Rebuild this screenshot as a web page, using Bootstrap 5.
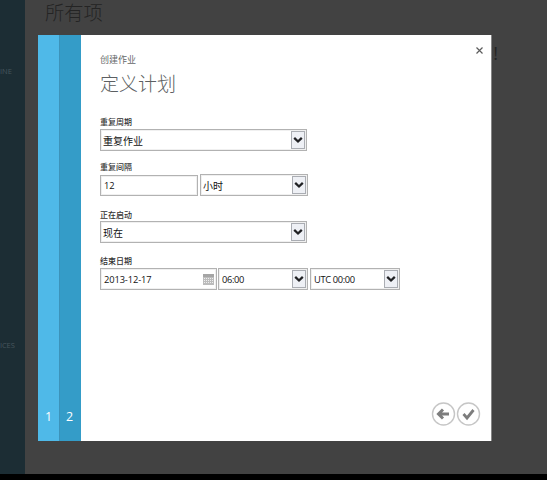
<!DOCTYPE html>
<html lang="zh-CN">
<head>
<meta charset="utf-8">
<meta name="viewport" content="width=device-width, initial-scale=1">
<title>创建作业</title>
<link href="https://cdn.jsdelivr.net/npm/bootstrap@5.3.0/dist/css/bootstrap.min.css" rel="stylesheet">
<style>
body{width:547px;height:480px;background:#000;font-family:"Open Sans","Noto Sans CJK SC",sans-serif;font-size:9.5px;line-height:1;color:#222}
.page-back{height:474px;background:#424242}
.side-nav{width:25px;background:#1c2d34;color:#46555c;font-size:7.5px;line-height:10px}
.side-nav .entry-a{margin-top:66px}
.side-nav .entry-b{margin:264px 0 0 0;letter-spacing:-.1px}
.back-title{margin:2px 0 0 20px;font-size:19.3px;line-height:22px;font-weight:300;color:#242424}
.back-mark{margin:43px 49px 0 0;font-size:18px;line-height:20px;font-weight:400;color:#242424}
.wizard{left:38px;top:35px;width:454px;height:406px;background:#fff;border-right:1px solid #858585}
.step{color:#fff;font-size:12.5px;line-height:14px;padding-bottom:17px}
.step-one{width:22px;background:#4fb9e8;border-right:1px solid #3c93ba}
.step-two{width:21px;background:#349cc8;padding-right:2px}
.wizard-body{padding:19px 10px 14px 19px}
.crumb{font-size:9px;line-height:12px;color:#66686a}
.wizard-title{font-size:19px;line-height:24px;font-weight:300;color:#5c5f62;margin:6px 0 0}
.close-x{width:9px;height:9px;margin-top:-8px;margin-right:-3px}
.fields{margin-top:21px}
.field-label{font-size:8px;line-height:10px;height:10px;font-weight:500;color:#333;margin:0 0 2px}
.gap-a{margin-top:11px}
.gap-b{margin-top:14px;margin-bottom:1px}
.gap-c{margin-top:13px}
.box{height:22px;border:1px solid #b2b2b2;box-shadow:inset 0 0 0 1px #f0f0f0;background:#fff;padding:0 1px 0 3px;color:#111}
.box .arrow{width:14px;height:18px;border:1px solid #aaadb3;background:#eef0f5;flex:none}
.box span{padding-top:1px}
.w-full{width:207px}
.w-num{width:98px;height:21px}
.w-unit{width:108px;margin-left:2px}
.w-date{width:117px;margin-right:1px;padding-right:2px}
.w-time{width:90px}
.w-time+.w-time{margin-left:2px}
.latin{font-size:9.3px;letter-spacing:-.1px}
.tight{letter-spacing:-.35px}
.cjk{font-size:10px;margin-left:-1px}
</style>
<script src="https://cdn.jsdelivr.net/npm/bootstrap@5.3.0/dist/js/bootstrap.bundle.min.js"></script>
</head>
<body class="overflow-hidden position-relative">
<svg class="d-none">
  <symbol id="chev" viewBox="0 0 12 16"><path d="M2.2 5.9 6 9.5l3.8-3.6" fill="none" stroke="#202124" stroke-width="2.3"/></symbol>
</svg>
<div class="page-back d-flex">
  <div class="side-nav overflow-hidden text-nowrap flex-shrink-0">
    <div class="entry-a">INE</div>
    <div class="entry-b">ICES</div>
  </div>
  <div class="back-title">所有项</div>
  <div class="back-mark ms-auto">!</div>
</div>
<div class="wizard position-absolute d-flex">
  <div class="step step-one d-flex align-items-end justify-content-center">1</div>
  <div class="step step-two d-flex align-items-end justify-content-center">2</div>
  <div class="wizard-body flex-grow-1 d-flex flex-column">
    <div class="d-flex justify-content-between">
      <div class="crumb">创建作业</div>
      <svg class="close-x" viewBox="0 0 9 9"><path d="m1.5 1.5 6 6m0-6-6 6" stroke="#5c5c5c" stroke-width="1.2"/></svg>
    </div>
    <h1 class="wizard-title">定义计划</h1>
    <div class="fields">
      <div class="field-label">重复周期</div>
      <div class="box w-full d-flex align-items-center justify-content-between"><span class="cjk">重复作业</span><svg class="arrow"><use href="#chev"/></svg></div>
      <div class="field-label gap-a">重复间隔</div>
      <div class="d-flex align-items-end">
        <div class="box w-num d-flex align-items-center latin"><span>12</span></div>
        <div class="box w-unit d-flex align-items-center justify-content-between"><span class="cjk">小时</span><svg class="arrow"><use href="#chev"/></svg></div>
      </div>
      <div class="field-label gap-b">正在启动</div>
      <div class="box w-full d-flex align-items-center justify-content-between"><span class="cjk">现在</span><svg class="arrow"><use href="#chev"/></svg></div>
      <div class="field-label gap-c">结束日期</div>
      <div class="d-flex">
        <div class="box w-date d-flex align-items-center justify-content-between latin"><span>2013-12-17</span>
          <svg width="11" height="11" viewBox="0 0 11 11"><path fill="#a5a5a5" d="M0 0h11v3H0z"/><path fill="#bcbcbc" d="M0 3h11v8H0z"/><path d="M1 4.5h9M1 6.5h9M1 8.5h9" stroke="#eee" stroke-dasharray="1 1"/></svg>
        </div>
        <div class="box w-time d-flex align-items-center justify-content-between latin tight"><span>06:00</span><svg class="arrow"><use href="#chev"/></svg></div>
        <div class="box w-time d-flex align-items-center justify-content-between latin tight"><span>UTC 00:00</span><svg class="arrow"><use href="#chev"/></svg></div>
      </div>
    </div>
    <div class="mt-auto d-flex justify-content-end">
      <svg width="25" height="26" viewBox="0 0 25 26"><circle cx="12.5" cy="13" r="11" fill="#fff" stroke="#c6c6c6" stroke-width="1.4"/><path d="M18 13H7.5M12 8.5 7.5 13l4.5 4.5" fill="none" stroke="#7d7d7d" stroke-width="3"/></svg>
      <svg width="25" height="26" viewBox="0 0 25 26"><circle cx="12.5" cy="13" r="11" fill="#fff" stroke="#c6c6c6" stroke-width="1.4"/><path d="m7.5 13 3.5 4 6.5-8" fill="none" stroke="#7d7d7d" stroke-width="2.8"/></svg>
    </div>
  </div>
</div>
</body>
</html>
